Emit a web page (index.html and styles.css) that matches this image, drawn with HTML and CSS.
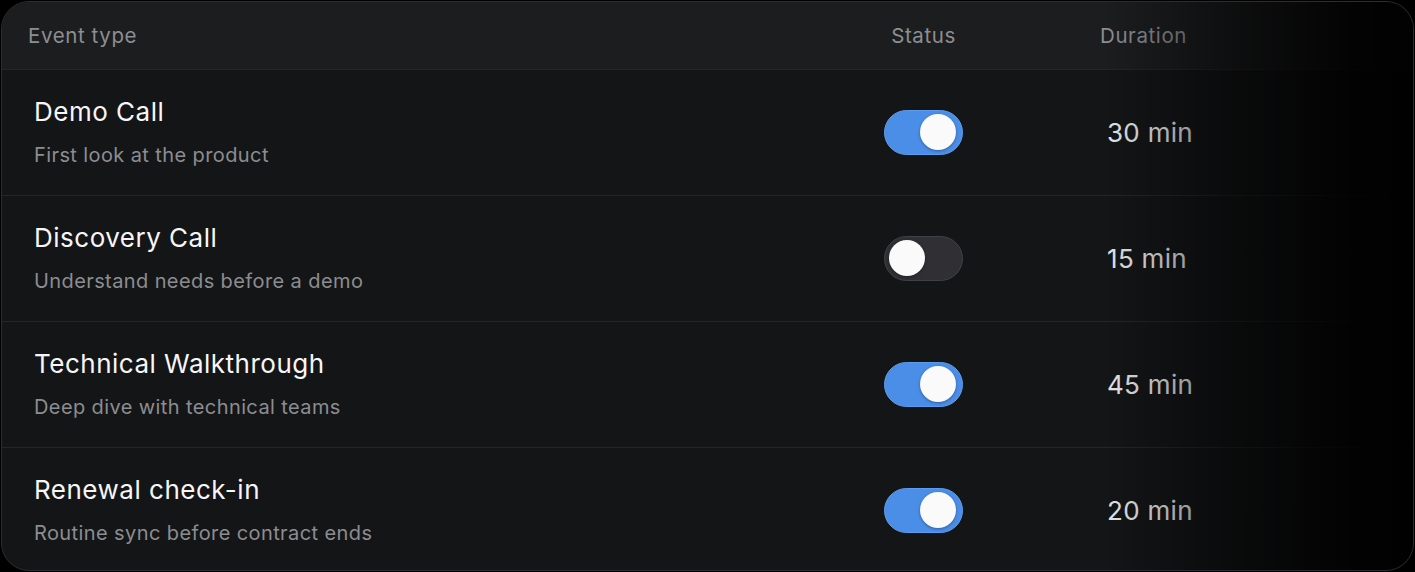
FILE: index.html
```html
<!DOCTYPE html>
<html lang="en">
<head>
<meta charset="utf-8">
<title>Event types</title>
<link rel="stylesheet" href="styles.css">
</head>
<body>
<div class="card">
  <div class="row head">
    <div class="h-type">Event type</div>
    <div class="h-status">Status</div>
    <div class="h-duration">Duration</div>
  </div>
  <div class="row item">
    <div class="info"><div class="title">Demo Call</div><div class="sub">First look at the product</div></div>
    <div class="toggle on"><span class="knob"></span></div>
    <div class="dur">30 min</div>
  </div>
  <div class="row item">
    <div class="info"><div class="title">Discovery Call</div><div class="sub">Understand needs before a demo</div></div>
    <div class="toggle"><span class="knob"></span></div>
    <div class="dur">15 min</div>
  </div>
  <div class="row item">
    <div class="info"><div class="title">Technical Walkthrough</div><div class="sub">Deep dive with technical teams</div></div>
    <div class="toggle on"><span class="knob"></span></div>
    <div class="dur">45 min</div>
  </div>
  <div class="row item last">
    <div class="info"><div class="title">Renewal check-in</div><div class="sub">Routine sync before contract ends</div></div>
    <div class="toggle on"><span class="knob"></span></div>
    <div class="dur">20 min</div>
  </div>
  <div class="fade"></div>
</div>
</body>
</html>
```

FILE: styles.css
```css
* { box-sizing: border-box; }
html, body { margin: 0; padding: 0; background: #000; }
body {
  font-family: Inter, "Noto Sans", sans-serif;
  padding: 1px;
  width: 1415px;
  height: 572px;
}
.card {
  position: relative;
  width: 1413px;
  height: 570px;
  border: 1px solid #2c2d30;
  border-radius: 28px;
  background: #141517;
  overflow: hidden;
}
.row {
  display: grid;
  grid-template-columns: 1fr 79px 450px;
  align-items: center;
}
.head {
  height: 67px;
  background: #1c1d1f;
  color: #8d8e92;
  font-size: 20.5px;
  letter-spacing: 0.6px;
}
.h-type { padding-left: 26px; }
.h-status { text-align: center; white-space: nowrap; margin-left: -10px; margin-right: -10px; }
.h-duration { padding-left: 137px; }
.item {
  height: 126px;
  border-top: 1px solid #25262a;
}
.info { padding-left: 32px; padding-bottom: 2px; }
.title {
  color: #f6f6f7;
  font-size: 26px;
  line-height: 34px;
  letter-spacing: 0.5px;
}
.sub {
  color: #8c8d91;
  font-size: 20px;
  line-height: 26px;
  margin-top: 13px;
  letter-spacing: 0.4px;
}
.toggle {
  width: 79px;
  height: 45px;
  border-radius: 23px;
  background: #303034;
  border: 1.5px solid #404146;
  position: relative;
}
.toggle.on {
  background: #4a8ee8;
  border-color: #5b9bf0;
}
.knob {
  position: absolute;
  top: 3px;
  left: 4px;
  width: 36px;
  height: 36px;
  border-radius: 50%;
  background: #fafafa;
  box-shadow: 0 1px 3px rgba(0,0,0,0.35);
}
.toggle.on .knob { left: 35px; }
.dur {
  padding-left: 144px;
  color: #e8e8ea;
  font-size: 26px;
  letter-spacing: 0.3px;
}
.fade {
  position: absolute;
  inset: 0;
  pointer-events: none;
  background: linear-gradient(to right, rgba(0,0,0,0) 0%, rgba(0,0,0,0) 78%, rgba(0,0,0,0.55) 88%, rgba(0,0,0,0.9) 96%, rgba(0,0,0,0.95) 100%);
}
```
